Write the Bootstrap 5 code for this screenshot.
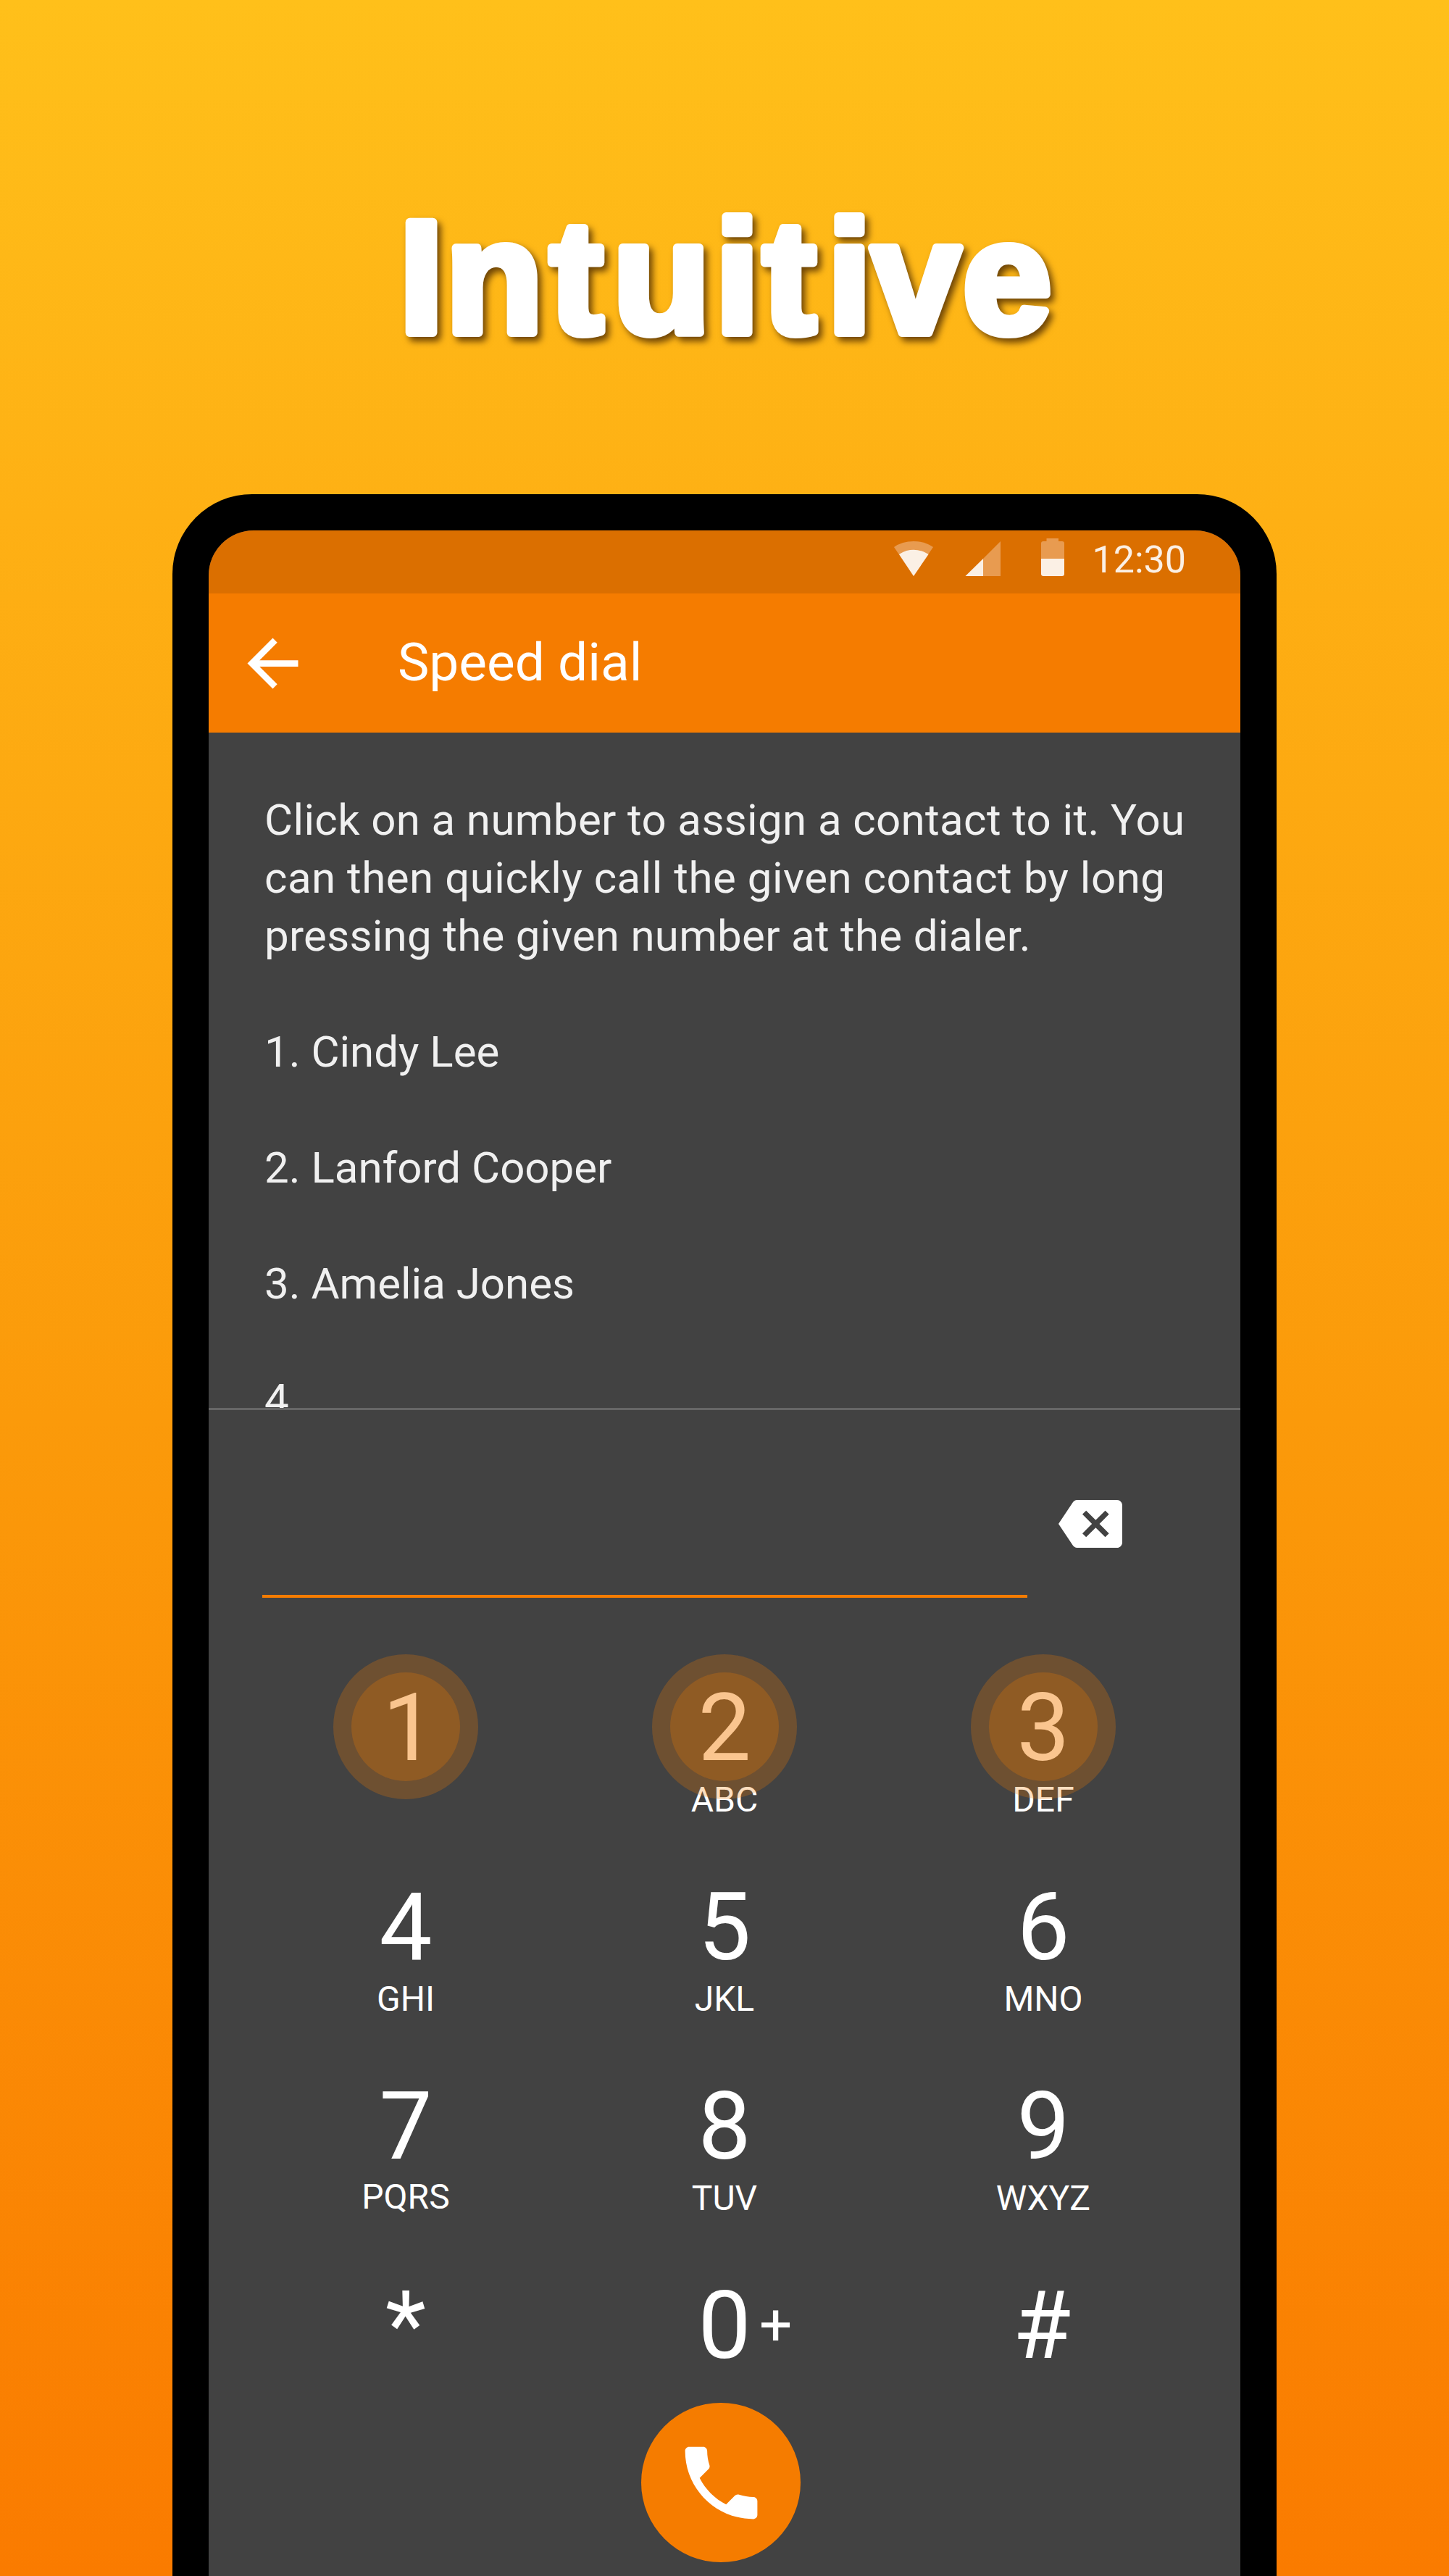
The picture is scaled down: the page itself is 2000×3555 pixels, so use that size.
<!DOCTYPE html>
<html lang="en">
<head>
<meta charset="utf-8">
<title>Speed dial</title>
<link href="https://cdn.jsdelivr.net/npm/bootstrap@5.3.0/dist/css/bootstrap.min.css" rel="stylesheet">
<style>
  body { font-family: Roboto, "Liberation Sans", sans-serif; }
  .promo { width: 2000px; height: 3555px; background: linear-gradient(180deg, #ffc01a 0%, #feb014 20%, #fb9a0a 55%, #fa7b00 100%); }
  .headline-box { height: 682px; }
  .headline-box text { font-family: "Liberation Sans", sans-serif; font-weight: 700; font-size: 220px; fill: #fff; stroke: #fff; stroke-width: 12px; stroke-linejoin: round; }
  .headline-box g { filter: drop-shadow(5px 6px 5px rgba(60, 30, 0, .75)); }
  .phone { width: 1524px; height: 2873px; padding: 50px 50px 0; border-radius: 110px 110px 0 0; background: #000; }
  .screen { height: 2823px; border-radius: 62px 62px 0 0; background: #424242; color: #fff; }
  .status-bar { height: 87px; background: #db6f00; padding-right: 75px; font-size: 52px; line-height: 81px; color: #fbf0e5; }
  .status-icons { width: 254px; height: 87px; margin-right: 30px; }
  .app-bar { height: 192px; background: #f57c00; padding-left: 36px; }
  .app-title { font-size: 73px; line-height: 80px; margin: -2px 0 0 120px; }
  .contacts { height: 932px; padding: 81px 0 0 77px; font-size: 60px; line-height: 80px; color: #f0f0f0; }
  .contacts p, .contacts li { margin-bottom: 80px; }
  .track-1 { letter-spacing: .38px; }
  .track-2 { letter-spacing: .51px; }
  .track-3 { letter-spacing: .3px; }
  .divider { height: 3px; background: #666; }
  .entry-row { height: 262px; padding-left: 74px; }
  .entry { width: 1056px; height: 259px; border-bottom: 4px solid #f57c00; }
  .entry-row svg { margin: 124px 0 0 43px; }
  .keypad { width: 1320px; margin-top: 112px; }
  .key { height: 275px; line-height: 1; }
  .digit { font-size: 130px; line-height: 130px; }
  .digit-one { padding-left: 9px; }
  .digit-hash { padding-right: 4px; }
  .letters { font-size: 48px; line-height: 48px; margin-top: 10px; }
  .letters-raised { margin-top: 8px; }
  .ripple { width: 200px; height: 200px; left: 120px; top: -37px; background: rgba(245, 124, 0, .25); }
  .ripple::after { content: ""; position: absolute; inset: 25px; border-radius: 50%; background: rgba(245, 124, 0, .25); }
  .plus-sign { font-size: 80px; line-height: 80px; left: 268px; top: 24px; }
  .call { width: 220px; height: 220px; background: #f57c00; margin: -104px 0 0 597px; }
</style>
<script src="https://cdn.jsdelivr.net/npm/bootstrap@5.3.0/dist/js/bootstrap.bundle.min.js"></script>
</head>
<body class="m-0">
<main class="promo overflow-hidden">
  <h1 class="headline-box m-0">
    <svg width="2000" height="682" viewBox="0 0 2000 682" class="d-block" role="img" aria-label="Intuitive">
      <g><text y="459" x="551 615 759 846 987 1053 1142 1203 1329">Intuitive</text></g>
    </svg>
  </h1>
  <section class="phone mx-auto">
    <div class="screen overflow-hidden d-flex flex-column">
      <div class="status-bar d-flex justify-content-end flex-shrink-0">
        <svg class="status-icons" viewBox="1224 732 254 87">
          <path fill="#e89b50" d="M1234 755Q1245 747 1261 747T1288 755L1261 795z"/>
          <path fill="#fbf0e5" d="M1241 765Q1250 758.700 1261 758.700T1281.500 765L1261 795z"/>
          <path fill="#e89b50" d="M1381 747V795H1357V771z"/>
          <path fill="#fbf0e5" d="M1357 771V795H1332.500z"/>
          <path fill="#e89b50" d="M1444.500 743H1461V747H1466Q1469 747 1469 750V771H1437V750Q1437 747 1440 747H1444.500z"/>
          <path fill="#fbf0e5" d="M1437 771H1469V792Q1469 795 1466 795H1440Q1437 795 1437 792z"/>
        </svg>
        <span>12:30</span>
      </div>
      <header class="app-bar d-flex align-items-center flex-shrink-0">
        <svg width="105" height="105" viewBox="0 0 24 24" fill="#fff"><path d="M20 11H7.830l5.590-5.590L12 4l-8 8 8 8 1.410-1.410L7.830 13H20z"/></svg>
        <div class="app-title">Speed dial</div>
      </header>
      <div class="contacts overflow-hidden flex-shrink-0">
        <p><span class="track-1">Click on a number to assign a contact to it. You</span><br><span class="track-2">can then quickly call the given contact by long</span><br><span class="track-3">pressing the given number at the dialer.</span></p>
        <ul class="list-unstyled m-0">
          <li>1. Cindy Lee</li>
          <li>2. Lanford Cooper</li>
          <li>3. Amelia Jones</li>
          <li>4</li>
        </ul>
      </div>
      <div class="divider flex-shrink-0"></div>
      <div class="entry-row d-flex flex-shrink-0 align-items-start">
        <div class="entry"></div>
        <svg width="88" height="66" viewBox="0 3 24 18" fill="#fff"><path d="M22 3H7c-.69 0-1.230.35-1.590.88L0 12l5.410 8.110c.36.53.9.89 1.590.89h15c1.100 0 2-.9 2-2V5c0-1.100-.9-2-2-2zm-3 12.590L17.590 17 14 13.410 10.410 17 9 15.590 12.590 12 9 8.410 10.410 7 14 10.590 17.590 7 19 8.410 15.410 12z"/></svg>
      </div>
      <div class="keypad mx-auto flex-shrink-0">
        <div class="row g-0 text-center">
          <div class="col-4 key position-relative"><div class="digit digit-one">1</div><span class="ripple rounded-circle position-absolute"></span></div>
          <div class="col-4 key position-relative"><div class="digit">2</div><div class="letters">ABC</div><span class="ripple rounded-circle position-absolute"></span></div>
          <div class="col-4 key position-relative"><div class="digit">3</div><div class="letters">DEF</div><span class="ripple rounded-circle position-absolute"></span></div>
          <div class="col-4 key"><div class="digit">4</div><div class="letters">GHI</div></div>
          <div class="col-4 key"><div class="digit">5</div><div class="letters">JKL</div></div>
          <div class="col-4 key"><div class="digit">6</div><div class="letters">MNO</div></div>
          <div class="col-4 key"><div class="digit">7</div><div class="letters letters-raised">PQRS</div></div>
          <div class="col-4 key"><div class="digit">8</div><div class="letters">TUV</div></div>
          <div class="col-4 key"><div class="digit">9</div><div class="letters">WXYZ</div></div>
          <div class="col-4 key"><div class="digit">*</div></div>
          <div class="col-4 key position-relative"><div class="digit">0</div><span class="plus-sign position-absolute">+</span></div>
          <div class="col-4 key"><div class="digit digit-hash">#</div></div>
        </div>
      </div>
      <div class="call rounded-circle d-flex align-items-center justify-content-center flex-shrink-0">
        <svg width="133" height="133" viewBox="0 0 24 24" fill="#fff"><path d="M6.620 10.790c1.440 2.830 3.760 5.140 6.590 6.590l2.200-2.200c.27-.27.67-.36 1.020-.24 1.120.37 2.330.57 3.570.57.55 0 1 .45 1 1V20c0 .55-.45 1-1 1-9.390 0-17-7.610-17-17 0-.55.45-1 1-1h3.500c.55 0 1 .45 1 1 0 1.250.2 2.450.57 3.570.11.35.03.74-.25 1.020z"/></svg>
      </div>
    </div>
  </section>
</main>
</body>
</html>
